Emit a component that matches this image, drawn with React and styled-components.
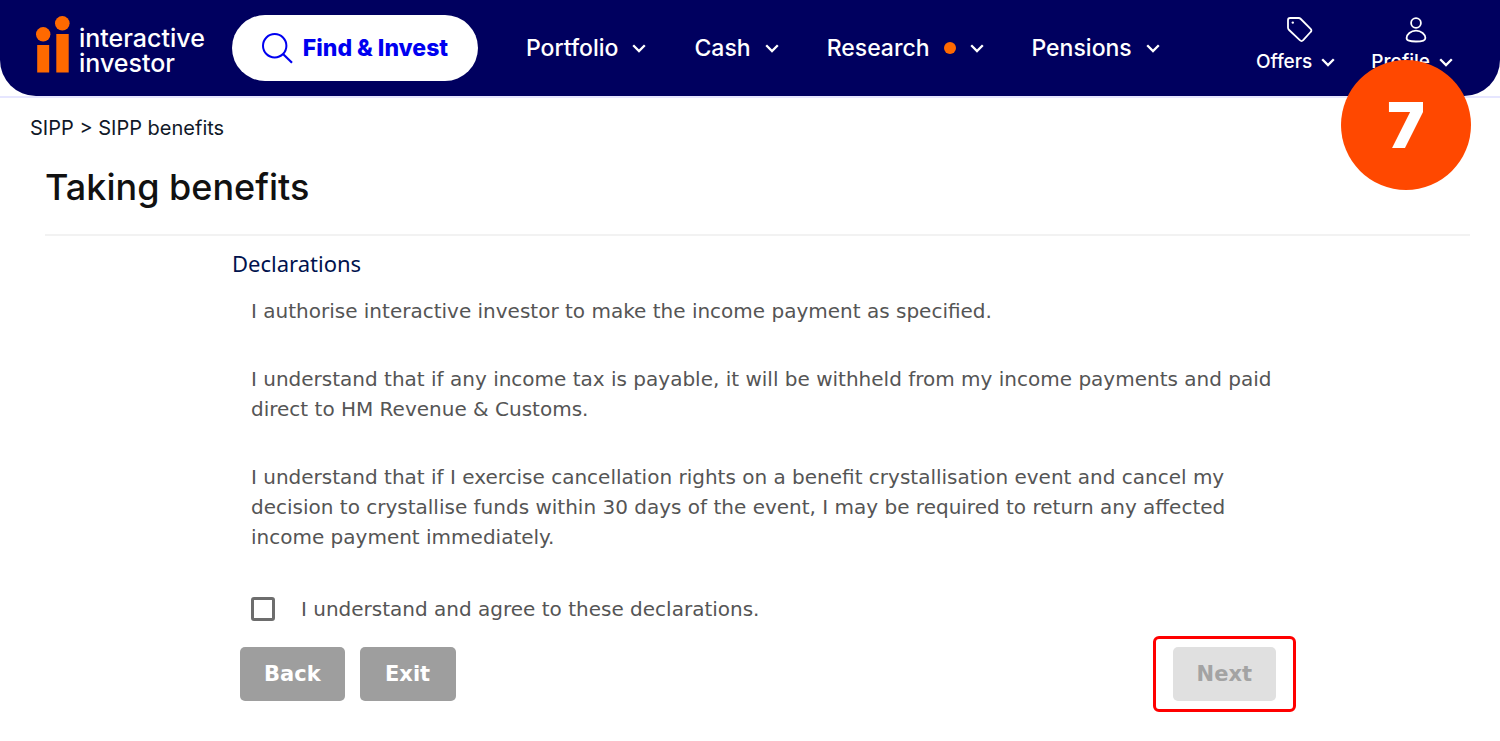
import React, { useState } from 'react'
import styled, { createGlobalStyle } from 'styled-components'

const GlobalStyle = createGlobalStyle`
  * {
    box-sizing: border-box;
  }

  body {
    margin: 0;
    background: #ffffff;
    font-family: Inter, "Liberation Sans", sans-serif;
  }
`

const Chevron = () => (
  <svg width="14" height="9" viewBox="0 0 14 9" fill="none" aria-hidden="true">
    <path d="M1.2 1.2 L7 7 L12.8 1.2" stroke="currentColor" strokeWidth="2.3" />
  </svg>
)

const LogoMark = () => (
  <svg width="34" height="57" viewBox="0 0 34 57" fill="#ff6900" aria-hidden="true">
    <circle cx="7.2" cy="18.3" r="7.2" />
    <circle cx="26.3" cy="7.3" r="7.3" />
    <rect x="1.2" y="29" width="12" height="27.5" />
    <rect x="20.3" y="18" width="12.4" height="38.5" />
  </svg>
)

const SearchIcon = () => (
  <svg width="31" height="31" viewBox="0 0 31 31" fill="none" stroke="#0000f0" strokeWidth="2" aria-hidden="true">
    <circle cx="12.7" cy="12.7" r="11.7" />
    <path d="M21 21 L30 29.8" strokeWidth="2.2" />
  </svg>
)

const TagIcon = () => (
  <svg width="26" height="26" viewBox="0 0 26 26" fill="none" stroke="#ffffff" strokeWidth="1.8" strokeLinejoin="round" aria-hidden="true">
    <path d="M3.2 1 H11.6 Q12.8 1 13.8 2 L23.6 11.8 Q25.2 13.4 23.6 15 L16.2 23.2 Q14.6 24.9 12.8 23.2 L2.1 13 Q1 12 1 10.8 V3.2 Q1 1 3.2 1 Z" />
    <circle cx="5.8" cy="5.6" r="1.2" fill="#ffffff" stroke="none" />
  </svg>
)

const ProfileIcon = () => (
  <svg width="22" height="26" viewBox="0 0 22 26" fill="none" stroke="#ffffff" strokeWidth="1.8" aria-hidden="true">
    <circle cx="11" cy="6" r="4.9" />
    <path d="M11 13.6 C16.2 13.6 20.4 17.4 20.4 20.9 C20.4 23.6 17.2 24.5 11 24.5 C4.8 24.5 1.6 23.6 1.6 20.9 C1.6 17.4 5.8 13.6 11 13.6 Z" />
  </svg>
)

const menu = [
  { label: 'Portfolio' },
  { label: 'Cash' },
  { label: 'Research', dot: true },
  { label: 'Pensions' },
]

export default function App() {
  const [agreed, setAgreed] = useState(false)

  return (
    <Page>
      <GlobalStyle />
      <HeaderWrap>
        <Header>
          <Logo href="#">
            <LogoMark />
            <LogoText>
              interactive
              <br />
              investor
            </LogoText>
          </Logo>
          <FindButton type="button">
            <SearchIcon />
            Find &amp; Invest
          </FindButton>
          <Nav>
            {menu.map((item) => (
              <NavButton type="button" key={item.label}>
                {item.label}
                {item.dot && <Dot />}
                <Chevron />
              </NavButton>
            ))}
          </Nav>
          <Account>
            <AccountButton type="button">
              <AccountIcon><TagIcon /></AccountIcon>
              <AccountLabel>Offers <Chevron /></AccountLabel>
            </AccountButton>
            <AccountButton type="button">
              <AccountIcon><ProfileIcon /></AccountIcon>
              <AccountLabel>Profile <Chevron /></AccountLabel>
            </AccountButton>
          </Account>
        </Header>
      </HeaderWrap>
      <StepBadge>7</StepBadge>

      <Breadcrumb aria-label="Breadcrumb">
        <a href="#">SIPP</a> &gt; <a href="#">SIPP benefits</a>
      </Breadcrumb>

      <Main>
        <Title>Taking benefits</Title>
        <Form onSubmit={(e) => e.preventDefault()}>
          <SubTitle>Declarations</SubTitle>
          <Declarations>
            <p>I authorise interactive investor to make the income payment as specified.</p>
            <p>
              I understand that if any income tax is payable, it will be withheld from my income
              payments and paid direct to HM Revenue &amp; Customs.
            </p>
            <p>
              I understand that if I exercise cancellation rights on a benefit crystallisation event
              and cancel my decision to crystallise funds within 30 days of the event, I may be
              required to return any affected income payment immediately.
            </p>
            <Agree htmlFor="agree">
              <Checkbox
                id="agree"
                type="checkbox"
                checked={agreed}
                onChange={(e) => setAgreed(e.target.checked)}
              />
              I understand and agree to these declarations.
            </Agree>
          </Declarations>
          <Actions>
            <Button type="button">Back</Button>
            <Button type="button">Exit</Button>
            <Highlight>
              <Button type="submit" disabled={!agreed}>Next</Button>
            </Highlight>
          </Actions>
        </Form>
      </Main>
    </Page>
  )
}

const Page = styled.div`
  position: relative;
`

const HeaderWrap = styled.div`
  border-bottom: 2px solid #e6e6ff;
`

const Header = styled.header`
  display: flex;
  align-items: center;
  min-height: 96px;
  padding: 0 47px 0 36px;
  border-radius: 0 0 36px 36px;
  background: #00005f;
  color: #ffffff;
`

const Logo = styled.a`
  display: flex;
  align-items: flex-end;
  gap: 9px;
  width: 172px;
  margin: 0 24px 5px 0;
  color: #ffffff;
  text-decoration: none;

  svg {
    margin-bottom: 3px;
  }
`

const LogoText = styled.span`
  font-size: 25px;
  font-weight: 500;
  line-height: 25px;
`

const FindButton = styled.button`
  display: flex;
  align-items: center;
  justify-content: center;
  gap: 10px;
  width: 246px;
  height: 66px;
  flex-shrink: 0;
  border: 0;
  border-radius: 33px;
  background: #ffffff;
  color: #0000f0;
  font: 800 23px Inter, sans-serif;
  cursor: pointer;
`

const Nav = styled.nav`
  display: flex;
  gap: 48px;
  margin-left: 48px;
`

const NavButton = styled.button`
  display: flex;
  align-items: center;
  gap: 14px;
  padding: 0;
  border: 0;
  background: none;
  color: #ffffff;
  font: 500 23px Inter, sans-serif;
  cursor: pointer;
`

const Dot = styled.span`
  width: 12px;
  height: 12px;
  border-radius: 50%;
  background: #ff6900;
`

const Account = styled.div`
  display: flex;
  gap: 36px;
  margin: 0 0 4px auto;
`

const AccountButton = styled.button`
  display: flex;
  flex-direction: column;
  align-items: center;
  gap: 6px;
  padding: 0;
  border: 0;
  background: none;
  color: #ffffff;
  font: 500 19px/26px Inter, sans-serif;
  cursor: pointer;
`

const AccountIcon = styled.span`
  display: flex;
  padding-left: 8px;
`

const AccountLabel = styled.span`
  display: flex;
  align-items: center;
  gap: 9px;
`

const StepBadge = styled.div`
  position: absolute;
  top: 60px;
  right: 29px;
  display: flex;
  align-items: center;
  justify-content: center;
  width: 130px;
  height: 130px;
  border-radius: 50%;
  background: #ff4800;
  color: #ffffff;
  font-size: 63px;
  font-weight: 900;
`

const Breadcrumb = styled.nav`
  padding: 16px 30px 0;
  color: #101828;
  font-size: 20px;
  line-height: 28px;

  a {
    color: inherit;
    text-decoration: none;
  }
`

const Main = styled.main`
  padding: 20px 30px 30px 45px;
`

const Title = styled.h1`
  margin: 0;
  padding-bottom: 22px;
  border-bottom: 2px solid #f2f2f2;
  color: #111111;
  font-size: 36px;
  font-weight: 500;
  line-height: 50px;
`

const Form = styled.form`
  margin: 0 174px 0 187px;
`

const SubTitle = styled.h2`
  margin: 12px 0 18px;
  color: #00124d;
  font: 400 22px/30px "Noto Sans", sans-serif;
`

const Declarations = styled.div`
  padding: 0 12px 0 19px;
  color: #555555;
  font: 400 20px/30px "DejaVu Sans", sans-serif;

  p {
    margin: 0 0 38px;
  }
`

const Agree = styled.label`
  display: flex;
  align-items: center;
  gap: 26px;
  margin-top: 42px;
`

const Checkbox = styled.input`
  appearance: none;
  width: 24px;
  height: 24px;
  margin: 0;
  flex-shrink: 0;
  border: 3px solid #6d6d6d;
  border-radius: 3px;
  background: #ffffff;

  &:checked {
    background: #6d6d6d;
  }
`

const Actions = styled.div`
  display: flex;
  align-items: center;
  gap: 15px;
  padding-left: 8px;
  margin-top: 12px;
`

const Button = styled.button`
  min-width: 96px;
  height: 54px;
  padding: 0 24px;
  border: 0;
  border-radius: 5px;
  background: #9e9e9e;
  color: #ffffff;
  font: 700 21px "DejaVu Sans", sans-serif;
  cursor: pointer;

  &:disabled {
    background: #e0e0e0;
    color: #a3a3a3;
    cursor: default;
  }
`

const Highlight = styled.div`
  margin-left: auto;
  padding: 8px 17px;
  border: 3px solid #ff0000;
  border-radius: 6px;
`
